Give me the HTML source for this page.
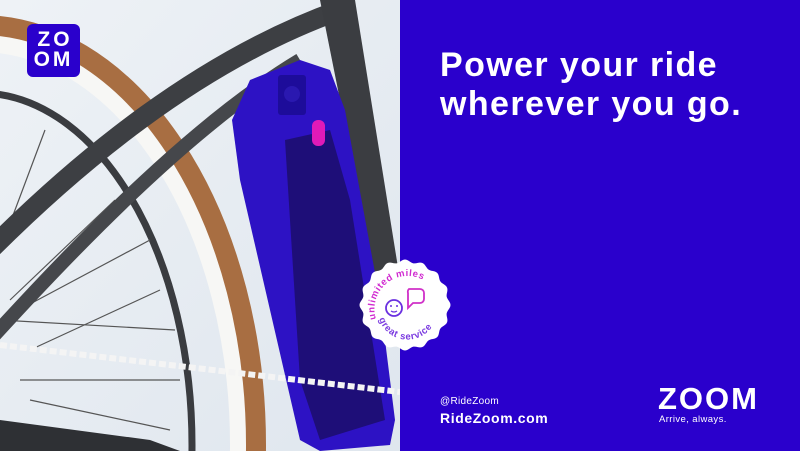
<!DOCTYPE html>
<html><head><meta charset="utf-8"><style>
html,body{margin:0;padding:0;width:800px;height:451px;overflow:hidden}
body{position:relative;font-family:"Liberation Sans",sans-serif;background:#2a00cc}
.left{position:absolute;left:0;top:0;width:400px;height:451px;overflow:hidden;background:#e8edf3}
.right{position:absolute;left:400px;top:0;width:400px;height:451px;background:#2a00cc;color:#fff}
h1{position:absolute;left:40px;top:46px;margin:0;font-size:34px;line-height:39px;font-weight:bold;letter-spacing:1.4px;white-space:nowrap}
.h{position:absolute;left:40px;top:396px;font-size:10px;letter-spacing:.3px}
.u{position:absolute;left:40px;top:410px;font-size:14px;font-weight:bold;letter-spacing:.6px}
.z{position:absolute;left:258px;top:381px;font-size:31px;font-weight:bold;letter-spacing:2px}
.t{position:absolute;left:259px;top:414px;font-size:9.5px;letter-spacing:.4px}
.logo{position:absolute;left:27px;top:24px;width:53px;height:53px;border-radius:6px;background:#2a00cc;color:#fff;font-weight:bold;font-size:21px;line-height:20px;text-align:center;padding-top:6px;box-sizing:border-box;letter-spacing:3px;text-indent:3px}
</style></head><body>
<div class="left">
<svg width="400" height="451" viewBox="0 0 400 451">
<defs><linearGradient id="bg" x1="0" y1="0" x2="1" y2="1"><stop offset="0" stop-color="#eef2f6"/><stop offset="1" stop-color="#dfe6ee"/></linearGradient></defs>
<rect width="400" height="451" fill="url(#bg)"/>
<ellipse cx="-20" cy="445" rx="265" ry="408" fill="none" stroke="#f7f7f5" stroke-width="30"/>
<ellipse cx="-20" cy="445" rx="276" ry="420" fill="none" stroke="#a86e42" stroke-width="20"/>
<ellipse cx="-20" cy="445" rx="212" ry="352" fill="none" stroke="#3a3c40" stroke-width="7"/>
<g stroke="#555" stroke-width="1.2">
<line x1="0" y1="250" x2="45" y2="130"/><line x1="10" y1="300" x2="115" y2="200"/><line x1="0" y1="320" x2="150" y2="240"/>
<line x1="30" y1="350" x2="160" y2="290"/><line x1="0" y1="320" x2="175" y2="330"/><line x1="20" y1="380" x2="180" y2="380"/>
<line x1="30" y1="400" x2="170" y2="430"/></g>
<path d="M-10 250 C 80 160, 200 60, 340 10" fill="none" stroke="#3d3f43" stroke-width="20" stroke-linecap="round"/>
<path d="M-10 340 C 90 230, 200 120, 300 60" fill="none" stroke="#45474b" stroke-width="14"/>
<path d="M320 0 L355 0 L400 280 L380 300 Z" fill="#3b3d41"/>
<path d="M0 420 L150 440 L180 451 L0 451Z" fill="#2e3034"/>
<path d="M250 80 L300 60 L330 70 L345 110 L380 300 L395 420 L390 445 L320 451 L300 440 L240 180 L232 120 Z" fill="#2d12c4"/>
<path d="M285 140 L330 130 L350 200 L385 420 L320 440 L300 380 Z" fill="#1e0e78"/>
<rect x="278" y="75" width="28" height="40" rx="3" fill="#1d0c9a"/>
<circle cx="292" cy="94" r="8" fill="#2a18b0"/>
<rect x="312" y="120" width="13" height="26" rx="6" fill="#e01ab8"/>
<line x1="0" y1="345" x2="400" y2="392" stroke="#f4f4f4" stroke-width="6" stroke-dasharray="7 3"/>
</svg>
<div class="logo">ZO<br>OM</div>
</div>
<div class="right">
<h1>Power your ride<br>wherever you go.</h1>
<div class="h">@RideZoom</div>
<div class="u">RideZoom.com</div>
<div class="z">ZOOM</div>
<div class="t">Arrive, always.</div>
</div>
<svg style="position:absolute;left:355px;top:255px" width="100" height="100" viewBox="-50 -50 100 100">
<path id="sc" d="" fill="#fff"/>
<script>
var d="";for(var i=0;i<=192;i++){var a=i/192*Math.PI*2;var r=44+1.5*Math.cos(a*16);d+=(i?"L":"M")+(r*Math.cos(a)).toFixed(2)+" "+(r*Math.sin(a)).toFixed(2);}document.getElementById("sc").setAttribute("d",d+"Z");
</script>
<defs><path id="arcT" d="M-29 14 A32 32 0 0 1 34 -6"/><path id="arcB" d="M-26 14 A30 30 0 0 0 32 10"/></defs>
<text font-family="Liberation Sans" font-weight="bold" font-size="9.5" letter-spacing="0.6" fill="#d02ad0"><textPath href="#arcT">unlimited miles</textPath></text>
<text font-family="Liberation Sans" font-weight="bold" font-size="9.5" letter-spacing="0.6" fill="#7a3ae0"><textPath href="#arcB">great service</textPath></text>
<circle cx="-11" cy="3" r="8" fill="none" stroke="#6a30e0" stroke-width="1.8"/>
<circle cx="-14" cy="1" r="1" fill="#6a30e0"/><circle cx="-8" cy="1" r="1" fill="#6a30e0"/>
<path d="M-14 6 q3 2 6 0" fill="none" stroke="#6a30e0" stroke-width="1.3"/>
<path d="M4 -16 h11 a4 4 0 0 1 4 4 v6 a4 4 0 0 1 -4 4 h-7 l-5 5 v-15 a4 4 0 0 1 1 -4z" fill="none" stroke="#d030c8" stroke-width="1.8"/>
</svg>
</body></html>
